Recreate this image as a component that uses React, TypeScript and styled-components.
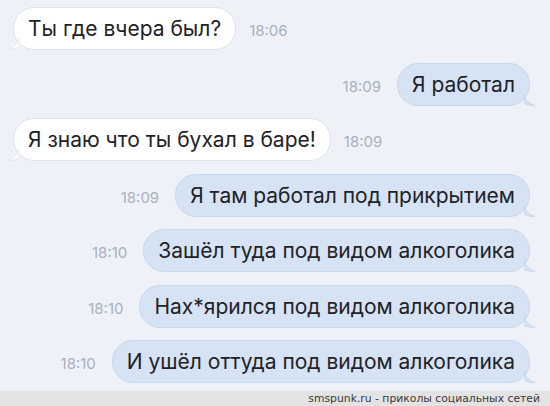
import React from 'react'
import styled, { createGlobalStyle } from 'styled-components'

const GlobalStyle = createGlobalStyle`
  html, body {
    margin: 0;
    padding: 0;
    background: #eef2f8;
  }
  body {
    width: 550px;
    height: 406px;
    overflow: hidden;
    font-family: Inter, Roboto, 'Liberation Sans', sans-serif;
  }
`

type Msg = { text: string; time: string; out: boolean }

const messages: Msg[] = [
  { text: 'Ты где вчера был?', time: '18:06', out: false },
  { text: 'Я работал', time: '18:09', out: true },
  { text: 'Я знаю что ты бухал в баре!', time: '18:09', out: false },
  { text: 'Я там работал под прикрытием', time: '18:09', out: true },
  { text: 'Зашёл туда под видом алкоголика', time: '18:10', out: true },
  { text: 'Нах*ярился под видом алкоголика', time: '18:10', out: true },
  { text: 'И ушёл оттуда под видом алкоголика', time: '18:10', out: true },
]

const Tail = ({ out }: { out: boolean }) => (
  <TailSvg out={out} width='12' height='12' viewBox='0 0 12 12'>
    {out ? (
      <path
        d='M0 0 C1 5 4 9 11 11.5 C6 11.5 2 10.5 0 9 Z'
        fill='#d5e3f5'
        stroke='#c3d3e8'
        strokeWidth='0.8'
      />
    ) : (
      <path
        d='M12 0 C11 5 8 9 1 11.5 C6 11.5 10 10.5 12 9 Z'
        fill='#ffffff'
        stroke='#dde2ea'
        strokeWidth='0.8'
      />
    )}
  </TailSvg>
)

const App = () => (
  <Page>
    <GlobalStyle />
    <Thread>
      {messages.map((m, i) => (
        <Row key={i} out={m.out}>
          {m.out && <Time>{m.time}</Time>}
          <Bubble out={m.out}>
            {m.text}
            <Tail out={m.out} />
          </Bubble>
          {!m.out && <Time>{m.time}</Time>}
        </Row>
      ))}
    </Thread>
    <Footer>smspunk.ru - приколы социальных сетей</Footer>
  </Page>
)

export default App

const Page = styled.div`
  width: 550px;
  height: 406px;
  display: flex;
  flex-direction: column;
  background: #eef2f8;
`

const Thread = styled.div`
  flex: 1;
  display: flex;
  flex-direction: column;
  gap: 12.5px;
  padding: 7px 20px 0 13px;
`

const Row = styled.div<{ out: boolean }>`
  display: flex;
  align-items: center;
  justify-content: ${({ out }) => (out ? 'flex-end' : 'flex-start')};
  gap: ${({ out }) => (out ? '16px' : '13px')};
`

const Bubble = styled.div<{ out: boolean }>`
  position: relative;
  height: 43px;
  box-sizing: border-box;
  display: flex;
  align-items: center;
  padding: 0 14px;
  border-radius: 21px;
  font-size: 21px;
  color: #222226;
  white-space: nowrap;
  background: ${({ out }) => (out ? '#d5e3f5' : '#ffffff')};
  border: 1px solid ${({ out }) => (out ? '#c9d8ec' : '#dde2ea')};
`

const TailSvg = styled.svg<{ out: boolean }>`
  position: absolute;
  bottom: -1px;
  ${({ out }) => (out ? 'right: -7px;' : 'left: -7px;')}
`

const Time = styled.span`
  font-size: 15px;
  color: #a8b0bc;
  padding-top: 4px;
`

const Footer = styled.div`
  height: 15px;
  background: #e3e3e3;
  display: flex;
  align-items: center;
  justify-content: flex-end;
  padding-right: 10px;
  font-family: 'DejaVu Sans', Verdana, sans-serif;
  font-size: 10.8px;
  color: #3a3a3a;
`
